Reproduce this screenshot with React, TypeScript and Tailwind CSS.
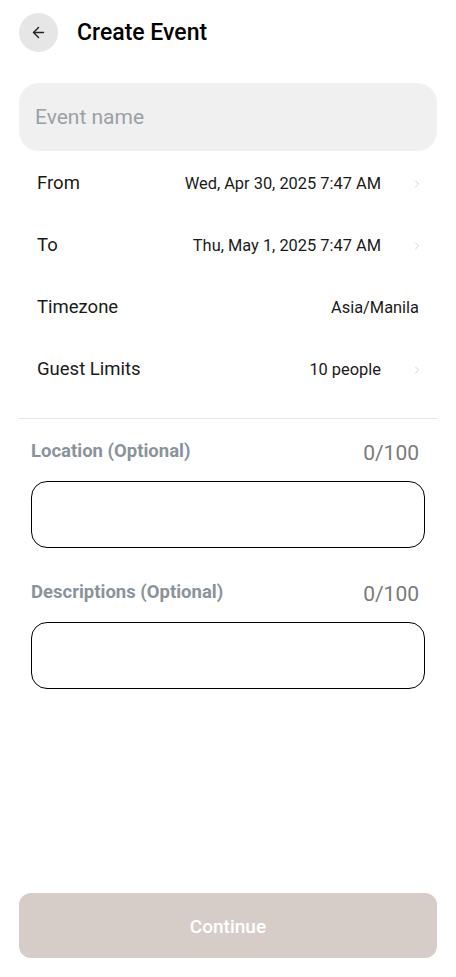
import { ArrowLeft, ChevronRight } from "lucide-react";

const rows = [
  { label: "From", value: "Wed, Apr 30, 2025 7:47 AM", chevron: true },
  { label: "To", value: "Thu, May 1, 2025 7:47 AM", chevron: true },
  { label: "Timezone", value: "Asia/Manila", chevron: false },
  { label: "Guest Limits", value: "10 people", chevron: true },
];

function OptionalField({ label }: { label: string }) {
  return (
    <div className="px-[12px]">
      <div className="flex items-center justify-between h-[34px] mb-[12px]">
        <span className="text-[18.5px] font-bold text-[#8a939c]">{label}</span>
        <span className="text-[21px] text-[#7a7a7a] pr-[6px] translate-y-[2px]">0/100</span>
      </div>
      <div className="h-[67px] rounded-[16px] border border-black" />
    </div>
  );
}

export default function App() {
  return (
    <div className="w-[456px] h-[977px] bg-white flex flex-col px-[19px] font-['Roboto',sans-serif] text-[#111]">
      <header className="flex items-center h-[63px] pt-[1px]">
        <button className="w-[39px] h-[39px] rounded-full bg-[#e6e6e6] flex items-center justify-center">
          <ArrowLeft className="w-[17px] h-[17px] text-[#222]" strokeWidth={2} />
        </button>
        <h1 className="ml-[19px] text-[23px] font-medium text-black translate-y-[1px]">Create Event</h1>
      </header>

      <div className="mt-[20px] h-[68px] rounded-[20px] bg-[#f0f0f0] flex items-center px-[16px]">
        <span className="text-[21px] text-[#9aa0a6] translate-y-[1px]">Event name</span>
      </div>

      <div className="pt-[2px]">
        {rows.map((r) => (
          <div key={r.label} className="flex items-center h-[62px] pl-[18px] pr-[18px]">
            <span className="text-[18.5px] text-[#1a1a1a]">{r.label}</span>
            <span className="ml-auto text-[16.4px] text-[#1a1a1a]">{r.value}</span>
            {r.chevron ? (
              <span className="w-[38px] flex justify-end">
                <ChevronRight className="w-[12px] h-[12px] text-[#c4c4c4] -mr-[4px]" strokeWidth={1.5} />
              </span>
            ) : null}
          </div>
        ))}
      </div>

      <div className="mt-[17px] h-px bg-[#e6e6e6]" />

      <div className="mt-[16px] flex flex-col gap-[28px]">
        <OptionalField label="Location (Optional)" />
        <OptionalField label="Descriptions (Optional)" />
      </div>

      <div className="mt-auto mb-[19px]">
        <button className="w-full h-[65px] rounded-[12px] bg-[#d6cdc9] text-white text-[19px] font-medium pt-[3px]">
          Continue
        </button>
      </div>
    </div>
  );
}
